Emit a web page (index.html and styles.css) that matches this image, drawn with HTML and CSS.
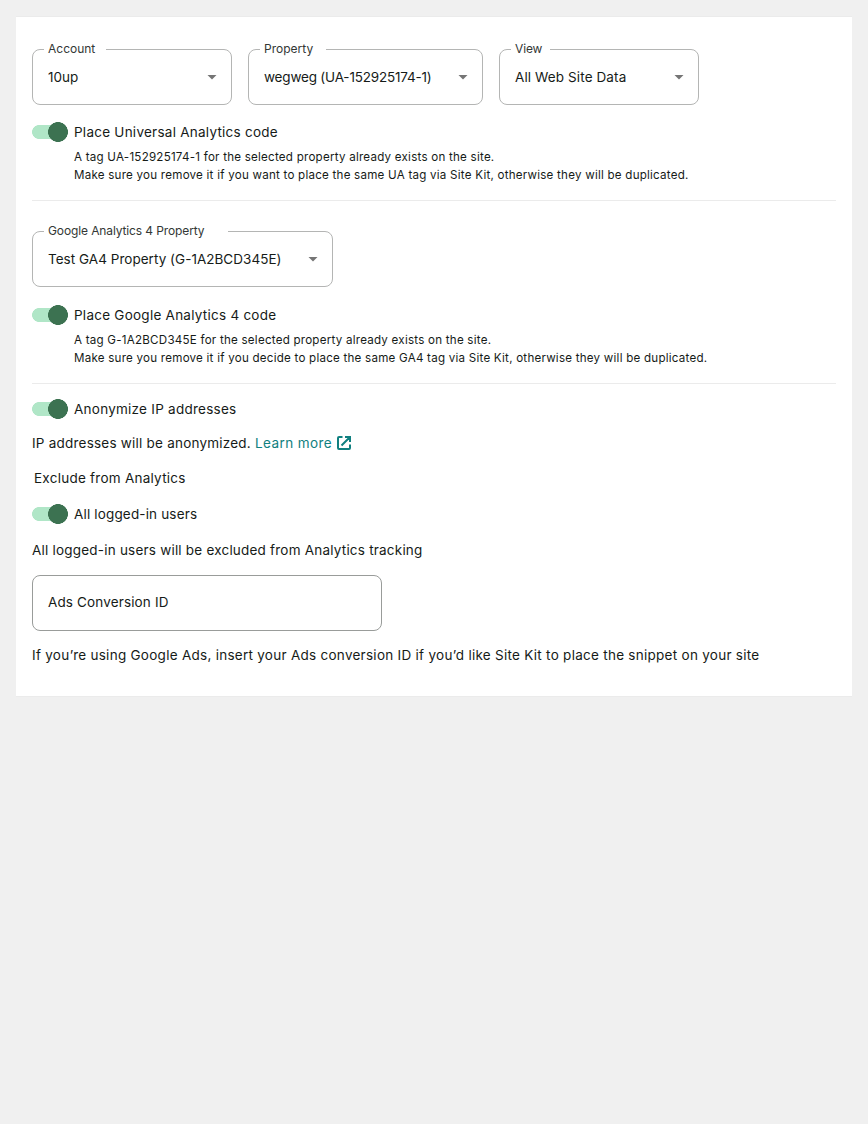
FILE: index.html
```
<!DOCTYPE html>
<html lang="en">
<head>
<meta charset="utf-8">
<title>Analytics settings</title>
<link rel="stylesheet" href="styles.css">
</head>
<body>
<main class="card">
  <div class="fields">
    <div class="select select-account"><span class="notch">Account</span><span class="value">10up</span><i class="arrow"></i></div>
    <div class="select select-property"><span class="notch">Property</span><span class="value">wegweg (UA-152925174-1)</span><i class="arrow"></i></div>
    <div class="select select-view"><span class="notch">View</span><span class="value">All Web Site Data</span><i class="arrow"></i></div>
  </div>
  <div class="toggle toggle-ua"><i class="switch"></i><span>Place Universal Analytics code</span></div>
  <p class="note">A tag UA-152925174-1 for the selected property already exists on the site.<br>Make sure you remove it if you want to place the same UA tag via Site Kit, otherwise they will be duplicated.</p>
  <section class="section-ga4">
    <div class="select select-ga4"><span class="notch">Google Analytics 4 Property</span><span class="value">Test GA4 Property (G-1A2BCD345E)</span><i class="arrow"></i></div>
    <div class="toggle toggle-ga4"><i class="switch"></i><span>Place Google Analytics 4 code</span></div>
    <p class="note">A tag G-1A2BCD345E for the selected property already exists on the site.<br>Make sure you remove it if you decide to place the same GA4 tag via Site Kit, otherwise they will be duplicated.</p>
  </section>
  <section class="section-privacy">
    <div class="toggle"><i class="switch"></i><span>Anonymize IP addresses</span></div>
    <p class="text text-ip"><span>IP addresses will be anonymized.</span><a class="link"><span>Learn more</span><svg class="external" viewBox="0 0 14 14"><path d="M5.500 1H2Q1 1 1 2v10q0 1 1 1h10q1 0 1-1V8.500M8 1h5v5M13 1L4.500 9.500" fill="none" stroke="currentColor" stroke-width="2"/></svg></a></p>
    <p class="text legend">Exclude from Analytics</p>
    <div class="toggle toggle-users"><i class="switch"></i><span>All logged-in users</span></div>
    <p class="text text-users">All logged-in users will be excluded from Analytics tracking</p>
    <div class="input">Ads Conversion ID</div>
    <p class="text text-ads">If you’re using Google Ads, insert your Ads conversion ID if you’d like Site Kit to place the snippet on your site</p>
  </section>
</main>
</body>
</html>
```
FILE: styles.css
```
* { box-sizing: border-box; }
body { margin: 0; padding: 16px; background: #f0f0f0; color: #161b18; font: 13.5px/20px Inter, sans-serif; letter-spacing: .25px; }
.card { height: 681px; padding: 32px 16px; background: #fff; border: solid #ebebeb; border-width: 1px 0; }
.fields { display: flex; gap: 16px; }
.select { position: relative; display: flex; align-items: center; height: 56px; padding: 0 14px 0 15px; border: 1px solid #b4b5b4; border-radius: 8px; }
.select-account, .select-view { width: 200px; }
.select-property { width: 235px; }
.select-ga4 { width: 301px; }
.value { flex: 1; white-space: nowrap; letter-spacing: .03px; }
.select-property .value { letter-spacing: -.19px; }
.select-view .value { letter-spacing: .11px; }
.arrow { width: 10px; height: 5px; background: #757575; clip-path: polygon(0 0, 100% 0, 50% 100%); }
.notch { position: absolute; top: -9px; left: 11px; padding-left: 4px; background: #fff; font-size: 12px; line-height: 16px; color: #333735; letter-spacing: 0; white-space: nowrap; }
.select-account .notch { width: 62px; }
.select-property .notch { width: 66px; }
.select-view .notch { width: 39px; letter-spacing: -.15px; }
.select-ga4 .notch { width: 184px; letter-spacing: -.12px; }
.toggle { display: flex; align-items: center; gap: 6px; height: 20px; white-space: nowrap; }
.toggle-ua { margin-top: 17px; }
.toggle-ga4 { margin-top: 18px; }
.switch { width: 36px; height: 20px; background: radial-gradient(circle at 26px 10px, #3c7251 9.600px, transparent 10.200px), linear-gradient(#b0e6c7, #b0e6c7) 7px 3px / 20px 14px no-repeat, radial-gradient(circle at 7px 10px, #b0e6c7 6.600px, transparent 7.200px); }
.note { margin: 6px 0 0 42px; font-size: 11.6px; line-height: 18px; letter-spacing: .23px; white-space: nowrap; }
.section-ga4 { margin-top: 16px; padding-top: 30px; border-top: 1px solid #ebebeb; }
.section-privacy { margin-top: 16px; padding-top: 15px; border-top: 1px solid #ebebeb; }
.text { margin: 0; white-space: nowrap; }
.text-ip { display: flex; gap: 4px; margin-top: 14px; letter-spacing: .22px; }
.link { display: flex; align-items: center; gap: 5px; color: #108080; letter-spacing: .42px; }
.external { width: 14px; height: 14px; margin-top: -1px; }
.legend { margin: 15px 0 0 2px; }
.toggle-users { margin-top: 16px; letter-spacing: .16px; }
.text-users { margin-top: 16px; letter-spacing: .21px; }
.input { display: flex; align-items: center; width: 350px; height: 56px; margin-top: 15px; padding: 0 15px 2px; border: 1px solid #999c9a; border-radius: 8px; letter-spacing: .14px; }
.text-ads { margin-top: 14px; letter-spacing: .27px; }
```
